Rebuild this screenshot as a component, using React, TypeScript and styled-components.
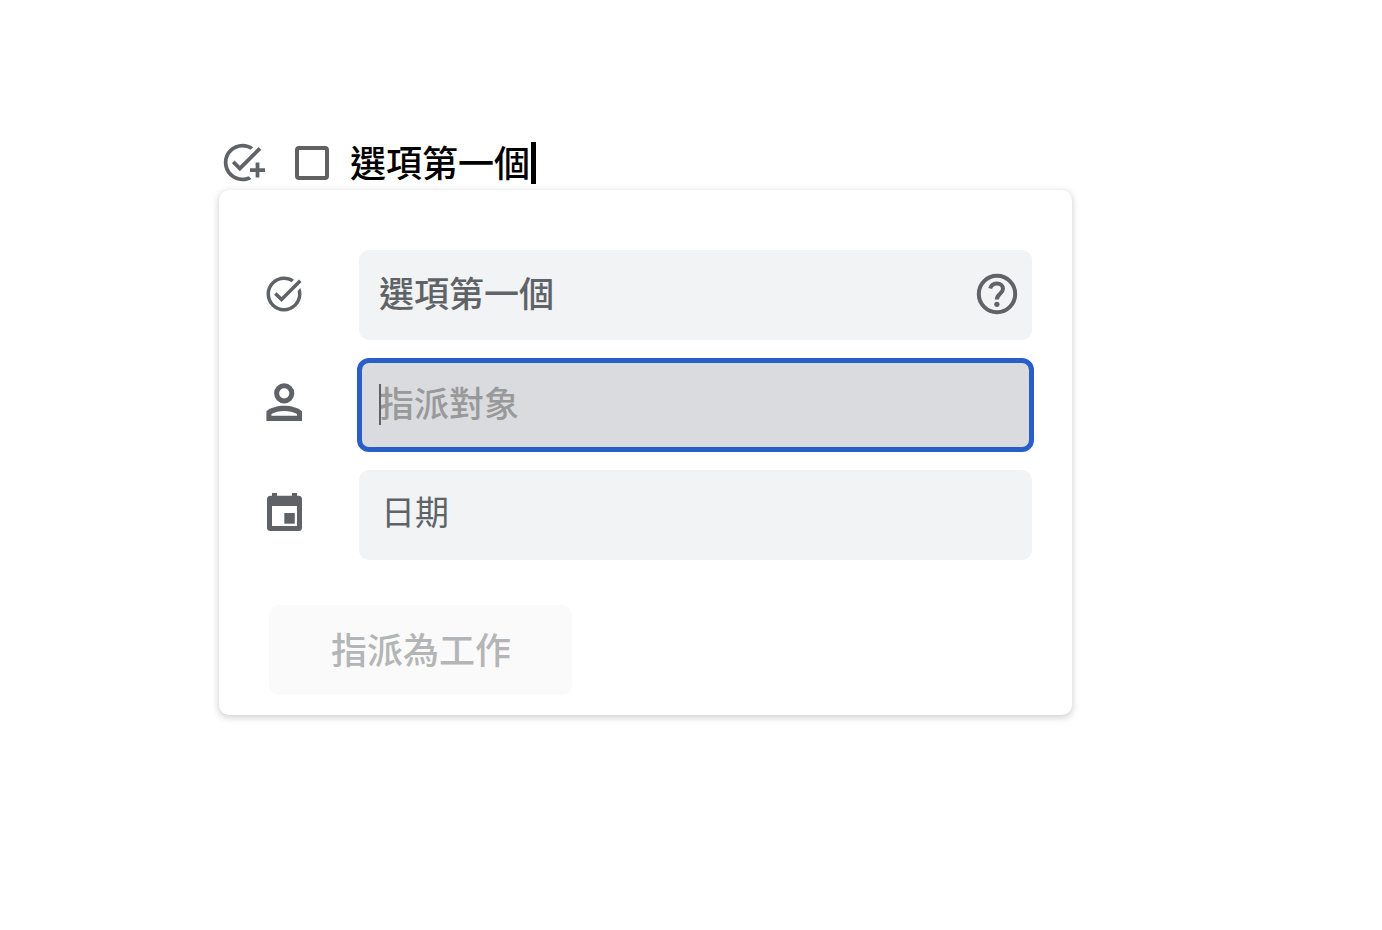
import React from "react";
import styled, { createGlobalStyle, css } from "styled-components";

const GlobalStyle = createGlobalStyle`
  *, *::before, *::after { box-sizing: border-box; }
  body {
    margin: 0;
    background: #fff;
    font-family: "Noto Sans CJK TC", "Noto Sans", sans-serif;
  }
`;

const ink = "#5f6368";

const Page = styled.main`
  padding: 138px 310px 40px 219px;
`;

const ChecklistLine = styled.div`
  display: flex;
  align-items: center;
  height: 50px;
  margin-bottom: 2px;
  padding-left: 1px;
`;

const IconButton = styled.button`
  display: flex;
  flex: none;
  padding: 0 0 2px;
  border: 0;
  background: none;
  color: ${ink};
  cursor: pointer;
`;

const Checkbox = styled.input`
  appearance: none;
  flex: none;
  width: 34px;
  height: 34px;
  margin: 0 21px 0 30px;
  border: 4px solid #616161;
  border-radius: 4px;
  background: #fff;
`;

const ItemLabel = styled.label`
  padding: 0 1px 4px 0;
  color: #000;
  font-size: 36px;
  font-weight: 500;
  line-height: 40px;
  white-space: nowrap;
`;

const TextCursor = styled.span`
  flex: none;
  width: 5px;
  height: 42px;
  background: #000;
`;

const Card = styled.form`
  padding: 60px 40px 20px 44px;
  border-radius: 10px;
  background: #fff;
  box-shadow: 0 2px 6px 1px rgba(60, 64, 67, 0.22);
`;

const Fields = styled.div`
  display: grid;
  gap: 20px;
`;

const FieldRow = styled.div`
  display: flex;
  align-items: center;
  gap: 54px;
`;

const RowIcon = styled.label`
  display: flex;
  flex: none;
  padding-bottom: 2px;
  color: ${ink};
`;

const FieldBox = styled.div<{ $focused?: boolean }>`
  position: relative;
  display: flex;
  flex: 1;
  align-items: center;
  min-width: 0;
  height: 90px;
  padding: 0 11px 0 20px;
  border-radius: 10px;
  background: #f1f3f4;
  ${(p) =>
    p.$focused &&
    css`
      background: #dadbdf;
      outline: 5px solid #285fc7;
      outline-offset: -3px;
    `}
`;

const FieldInput = styled.input<{ $date?: boolean }>`
  flex: 1;
  min-width: 0;
  padding: ${(p) => (p.$date ? "0 0 8px 2px" : "0 0 6px")};
  border: 0;
  outline: 0;
  background: none;
  color: ${ink};
  font-family: inherit;
  font-size: ${(p) => (p.$date ? "34px" : "35px")};
  font-weight: ${(p) => (p.$date ? 400 : 500)};
  line-height: 52px;
  &::placeholder {
    color: #999;
    opacity: 1;
  }
`;

const FieldCaret = styled.span`
  position: absolute;
  top: 24px;
  left: 20px;
  width: 2px;
  height: 41px;
  background: ${ink};
`;

const AssignButton = styled.button`
  height: 90px;
  margin: 45px 0 0 6px;
  padding: 0 61px 5px 62px;
  border: 0;
  border-radius: 10px;
  background: #fafafa;
  color: #b4b5b6;
  font-family: inherit;
  font-size: 36px;
  font-weight: 500;
  line-height: 54px;
  white-space: nowrap;
`;

const AddTaskIcon = () => (
  <svg width="45" height="45" viewBox="0 0 24 24" fill="currentColor" aria-hidden="true">
    <path d="M22 5.18 10.59 16.6l-4.24-4.24 1.41-1.41 2.83 2.83 10-10zM12 20c-4.41 0-8-3.59-8-8s3.59-8 8-8c1.57 0 3.04.46 4.28 1.25l1.45-1.45C16.1 2.67 14.13 2 12 2 6.48 2 2 6.48 2 12s4.48 10 10 10c1.73 0 3.36-.44 4.78-1.22l-1.5-1.5c-1 .46-2.11.72-3.28.72zm7-5h-3v2h3v3h2v-3h3v-2h-3v-3h-2z" />
  </svg>
);

const TaskIcon = () => (
  <svg width="42" height="42" viewBox="0 0 24 24" fill="currentColor" aria-hidden="true">
    <path d="M22 5.18 10.59 16.6l-4.24-4.24 1.41-1.41 2.83 2.83 10-10zm-2.21 5.04c.13.57.21 1.17.21 1.78 0 4.42-3.58 8-8 8s-8-3.58-8-8 3.58-8 8-8c1.58 0 3.04.46 4.28 1.25l1.44-1.44C16.1 2.67 14.13 2 12 2 6.48 2 2 6.48 2 12s4.48 10 10 10 10-4.48 10-10c0-1.19-.22-2.33-.6-3.39z" />
  </svg>
);

const PersonIcon = () => (
  <svg width="42" height="46" viewBox="0 -3 42 46" aria-hidden="true">
    <circle cx="21.2" cy="9.3" r="7.6" fill="none" stroke="currentColor" strokeWidth="5" />
    <path
      fill="currentColor"
      fillRule="evenodd"
      d="M3.4 37V27.2C7.2 23.6 14.6 21.7 21.2 21.7S35.2 23.6 39 27.2V37zM8.4 31.8H34V30C30.6 28 26 26.9 21.2 26.9S11.8 28 8.4 30z"
    />
  </svg>
);

const CalendarIcon = () => (
  <svg width="42" height="46" viewBox="0 -3 42 46" fill="currentColor" aria-hidden="true">
    <path
      fillRule="evenodd"
      d="M9 -1h5v2.8h15V-1h5v2.8h1.5A3.5 3.5 0 0 1 39 5.3V33.5A3.5 3.5 0 0 1 35.5 37h-28A3.5 3.5 0 0 1 4 33.5V5.3A3.5 3.5 0 0 1 7.5 1.8H9zM9 12v20h25V12z"
    />
    <path d="M21.3 19h10.5v10.7H21.3z" />
  </svg>
);

const HelpIcon = () => (
  <svg width="48" height="48" viewBox="0 0 48 48" fill="none" stroke="currentColor" strokeWidth="4" aria-hidden="true">
    <circle cx="24" cy="24" r="18.2" />
    <path d="M17.2 18.6c.8-3.2 3.2-5.2 6.6-5.2 3.7 0 6.2 2.2 6.2 5.4 0 4.8-6.200 5-6.200 10.700" />
    <circle cx="23.9" cy="34.3" r="2.6" fill="currentColor" stroke="none" />
  </svg>
);

export default function App() {
  return (
    <>
      <GlobalStyle />
      <Page>
        <ChecklistLine>
          <IconButton type="button" aria-label="指派為工作">
            <AddTaskIcon />
          </IconButton>
          <Checkbox type="checkbox" id="item" />
          <ItemLabel htmlFor="item">選項第一個</ItemLabel>
          <TextCursor />
        </ChecklistLine>
        <Card>
          <Fields>
            <FieldRow>
              <RowIcon htmlFor="task" aria-label="工作">
                <TaskIcon />
              </RowIcon>
              <FieldBox>
                <FieldInput id="task" type="text" defaultValue="選項第一個" />
                <IconButton type="button" aria-label="說明">
                  <HelpIcon />
                </IconButton>
              </FieldBox>
            </FieldRow>
            <FieldRow>
              <RowIcon htmlFor="assignee" aria-label="指派對象">
                <PersonIcon />
              </RowIcon>
              <FieldBox $focused>
                <FieldInput id="assignee" type="text" placeholder="指派對象" />
                <FieldCaret />
              </FieldBox>
            </FieldRow>
            <FieldRow>
              <RowIcon htmlFor="date" aria-label="日期">
                <CalendarIcon />
              </RowIcon>
              <FieldBox>
                <FieldInput $date id="date" type="text" defaultValue="日期" />
              </FieldBox>
            </FieldRow>
          </Fields>
          <AssignButton type="button" disabled>
            指派為工作
          </AssignButton>
        </Card>
      </Page>
    </>
  );
}
